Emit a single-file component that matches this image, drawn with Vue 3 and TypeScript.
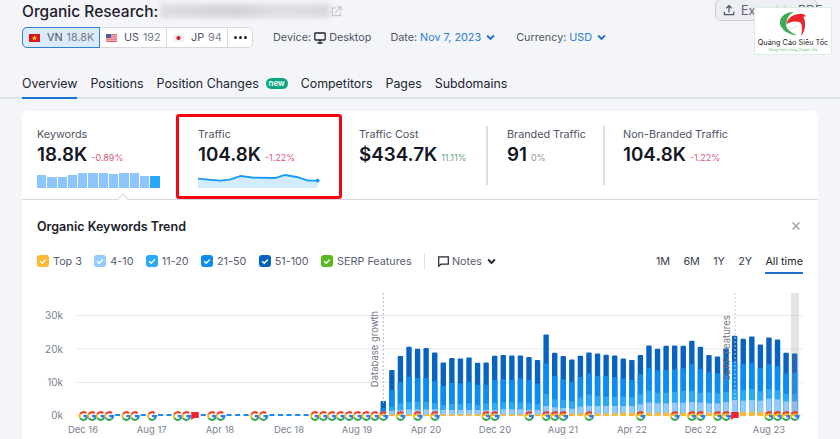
<script setup lang="ts">
import { computed } from "vue";

type Marker = { i: number; kind: "g" | "dash" | "flag" };

const BASE = 415;
const K = 3.33;
const xOf = (i: number) => 383.3 + 8.57 * i;
const yOf = (v: number) => BASE - v * K;

// cumulative values in k: total, up to 21-50, up to 11-20, up to 4-10
const rows: number[][] = [
  [4.2, 2, 1, 0.5], [13.5, 7.5, 2.5, 1.3], [17.7, 9.9, 3.5, 1.5], [20.5, 11.5, 3.9, 1.7], [19.9, 11.1, 3.9, 1.7],
  [20.1, 11.1, 3.9, 1.7], [18.8, 10.2, 3.5, 1.7], [15.8, 8.7, 3, 1.5], [17.1, 9.7, 3.3, 1.5], [17, 9.5, 3.3, 1.5],
  [17.3, 9.9, 3.5, 1.5], [15.7, 9, 3, 1.5], [15.8, 9.1, 3.5, 1.5], [17.8, 10.5, 3.7, 1.5], [18, 10.7, 3.9, 1.7],
  [17.9, 10.5, 3.9, 1.7], [17.9, 11, 3.7, 1.7], [17.4, 10.5, 3.5, 1.5], [16.5, 9.4, 3.3, 1.5], [24.2, 15.5, 6.3, 2.7],
  [18.7, 11.7, 4.7, 2.3], [17.7, 10.7, 4.5, 2.1], [16.7, 9.9, 4.1, 1.9], [17.8, 11.4, 5.3, 2.5], [18.8, 12.5, 6.2, 2.7],
  [18.5, 11.7, 5.7, 2.7], [18.1, 11.7, 5.5, 2.7], [17.9, 11.3, 5.5, 2.7], [17, 11, 5.5, 2.7], [16.5, 10.5, 5.3, 2.7],
  [18, 12.2, 6.3, 3.2], [20.9, 14.1, 7.3, 3.7], [19.9, 13.5, 6.7, 3.5], [20.8, 13.5, 6.7, 3.5], [20.9, 13.7, 6.9, 3.7],
  [20.8, 14, 7.2, 3.7], [22.3, 15.3, 7.2, 3.9], [20.5, 13.8, 6.7, 3.7], [18, 12.8, 6.7, 3.5], [17.6, 12.5, 6.5, 3.5],
  [20, 12, 6.9, 3.9], [23.8, 16, 7.5, 4.5], [22.9, 15.3, 7.5, 4.3], [23.6, 15.7, 7.8, 4.5], [21.2, 14.1, 7.1, 4.3],
  [23.3, 15.3, 7.8, 4.9], [22.7, 14.7, 7.5, 4.7], [18.7, 12.5, 6.3, 4.1], [18.5, 12.7, 6.3, 4.1],
];

const shades = ["#0862bf", "#0b8cf3", "#2aa8fa", "#93caff"];

const bars = computed(() =>
  rows.map((r, i) => ({
    x: xOf(i) - 2.7,
    top3: i < 20 ? 0.2 : i < 28 ? 0.5 : i < 42 ? 0.7 : 0.95,
    parts: r.map((v, n) => ({ y: yOf(v), h: v * K, fill: shades[n] })),
  })),
);

const markers: Marker[] = [];
const addAll = (list: number[], kind: Marker["kind"]) => list.forEach((i) => markers.push({ i, kind }));
addAll([-31, -28, -26, -25, -21, -18, -17, -16, -13, -12, -11, -10, -9], "dash");
addAll([-35, -34, -33, -32, -30, -29, -27, -24, -23, -20, -19, -15, -14, -8, -7, -6, -5, -4, -3, -2, -1, 0], "g");
addAll([2, 4, 6, 12, 13, 17, 19, 20, 21, 24, 30, 34, 36, 37, 39, 40, 45, 46, 47, 48], "g");
addAll([-22, 41], "flag");

const gridLines = [
  { y: 315.5, label: "30k" },
  { y: 349, label: "20k" },
  { y: 382.5, label: "10k" },
  { y: 415, label: "0k" },
];

const xLabels = [
  { x: 83, t: "Dec 16" }, { x: 151.7, t: "Aug 17" }, { x: 220, t: "Apr 18" }, { x: 289, t: "Dec 18" },
  { x: 357, t: "Aug 19" }, { x: 426, t: "Apr 20" }, { x: 495, t: "Dec 20" }, { x: 563, t: "Aug 21" },
  { x: 632, t: "Apr 22" }, { x: 700.7, t: "Dec 22" }, { x: 769, t: "Aug 23" },
];

const tabs = ["Overview", "Positions", "Position Changes", "Competitors", "Pages", "Subdomains"];
const sparkBars = [13.3, 11.3, 11.3, 13, 15.3, 14.7, 15.3, 13.7, 15, 14.7, 12, 12];
const legend = [
  { label: "Top 3", color: "#ffb92e" },
  { label: "4-10", color: "#93caff" },
  { label: "11-20", color: "#2aa8fa" },
  { label: "21-50", color: "#0b8cf3" },
  { label: "51-100", color: "#0862bf" },
  { label: "SERP Features", color: "#59b81f" },
];
const ranges = ["1M", "6M", "1Y", "2Y", "All time"];
</script>

<template>
  <div class="page">
    <header class="head">
      <div class="title-row">
        <h1>Organic Research:</h1>
        <div class="blurred"></div>
        <svg class="ext" viewBox="0 0 12 12" fill="none" stroke="#c3c6cf" stroke-width="1.3">
          <path d="M5 2H1.5v8.5H10V7" />
          <path d="M4.5 7.5L10.5 1.5M6.8 1h4.2v4.2" />
        </svg>
        <button class="export">
          <svg viewBox="0 0 14 14" fill="none" stroke="#4c5263" stroke-width="1.4">
            <path d="M7 10V2M3.8 5L7 1.8 10.2 5M1.5 9v3.5h11V9" />
          </svg>
          Export to PDF
        </button>
      </div>

      <div class="filter-row">
        <div class="chips">
          <div class="chip on vn">
            <svg class="flag" viewBox="0 0 11 8"><rect width="11" height="8" fill="#d8161f" /><path d="M5.5 1.2l.8 2h2l-1.6 1.3.6 2-1.8-1.2-1.8 1.2.6-2L2.7 3.2h2z" fill="#ffd21f" /></svg>
            <span>VN</span><em>18.8K</em>
          </div>
          <div class="chip us">
            <svg class="flag" viewBox="0 0 11 8"><rect width="11" height="8" fill="#e4646f" /><path d="M0 1.6h11M0 3.2h11M0 4.8h11M0 6.4h11" stroke="#f6d8dc" stroke-width=".7" /><rect width="5" height="4" fill="#4a5fa8" /></svg>
            <span>US</span><em>192</em>
          </div>
          <div class="chip jp">
            <svg class="flag" viewBox="0 0 11 8"><rect width="11" height="8" fill="#f1f1f3" /><circle cx="5.5" cy="4" r="2.1" fill="#d3142c" /></svg>
            <span>JP</span><em>94</em>
          </div>
          <div class="chip more"><i></i><i></i><i></i></div>
        </div>
        <div class="opt device">
          Device:
          <svg class="monitor" viewBox="0 0 12 12" fill="none" stroke="#20242e" stroke-width="1.3">
            <rect x=".8" y="1" width="10.4" height="7" rx=".8" />
            <path d="M6 8v2.5M3.4 11h5.2" />
          </svg>
          Desktop
        </div>
        <div class="opt date">Date: <b>Nov 7, 2023</b><svg class="chev" viewBox="0 0 8 6"><path d="M1 1.2l3 3 3-3" /></svg></div>
        <div class="opt currency">Currency: <b>USD</b><svg class="chev" viewBox="0 0 8 6"><path d="M1 1.2l3 3 3-3" /></svg></div>
      </div>

      <nav class="tabs">
        <div v-for="(t, n) in tabs" :key="t" class="tab" :class="{ active: n === 0 }">
          {{ t }}<span v-if="t === 'Position Changes'" class="new">new</span>
        </div>
      </nav>
    </header>

    <section class="card">
      <div class="metrics">
        <div class="metric kw">
          <div class="lbl">Keywords</div>
          <div class="val">18.8K<small class="neg">-0.89%</small></div>
          <div class="spark">
            <i v-for="(h, n) in sparkBars" :key="n" :class="{ last: n === sparkBars.length - 1 }" :style="{ height: h + 'px' }"></i>
          </div>
          <span class="notch"></span>
        </div>
        <div class="metric traffic">
          <div class="lbl">Traffic</div>
          <div class="val">104.8K<small class="neg">-1.22%</small></div>
          <svg class="line" viewBox="0 0 124 15">
            <path d="M0 5.7L10.3 6.7 22 7.7 32 6.7 42.7 3 55.3 4.7 77 5 87 2 98.7 4 110.3 7.7 119.7 7.7V15H0Z" fill="#d3ecfd" />
            <path d="M0 5.7L10.3 6.7 22 7.7 32 6.7 42.7 3 55.3 4.7 77 5 87 2 98.7 4 110.3 7.7 119.7 7.7" fill="none" stroke="#159bf5" stroke-width="1.8" />
            <circle cx="119.7" cy="7.7" r="1.9" fill="#159bf5" />
          </svg>
        </div>
        <div class="metric cost">
          <div class="lbl">Traffic Cost</div>
          <div class="val">$434.7K<small class="pos">11.11%</small></div>
        </div>
        <div class="metric branded">
          <div class="lbl">Branded Traffic</div>
          <div class="val">91<small class="zero">0%</small></div>
        </div>
        <div class="metric non">
          <div class="lbl">Non-Branded Traffic</div>
          <div class="val">104.8K<small class="neg">-1.22%</small></div>
        </div>
      </div>

      <div class="trend-head">
        <h2>Organic Keywords Trend</h2>
        <svg class="close" viewBox="0 0 10 10" stroke="#9a9ea9" stroke-width="1.4"><path d="M1.5 1.5l7 7M8.5 1.5l-7 7" /></svg>
      </div>

      <div class="legend-row">
        <div v-for="l in legend" :key="l.label" class="leg">
          <svg class="box" viewBox="0 0 12 12">
            <rect width="12" height="12" rx="3" :fill="l.color" />
            <path d="M3.2 6.2l2 2 3.6-3.8" fill="none" stroke="#fff" stroke-width="1.5" />
          </svg>
          {{ l.label }}
        </div>
        <div class="notes">
          <svg viewBox="0 0 11 11" fill="none" stroke="#20242e" stroke-width="1.2"><path d="M.7.8h9.6v7.4H3L.7 10.2Z" /></svg>
          Notes
          <svg class="chev dark" viewBox="0 0 8 6"><path d="M1 1.2l3 3 3-3" /></svg>
        </div>
        <div class="ranges">
          <span v-for="r in ranges" :key="r" :class="{ sel: r === 'All time' }">{{ r }}</span>
        </div>
      </div>

      <!-- viewBox follows page coordinates so the chart data stays readable -->
      <svg class="chart" viewBox="22 285 796 154" width="796" height="154">
        <defs>
          <g id="gmark" transform="scale(1.2)">
            <g fill="none" stroke-width="1.7">
              <path d="M-2.7-1.7A3.2 3.2 0 0 1 2.3-2.3" stroke="#ea4335" />
              <path d="M-2.7 1.7A3.2 3.2 0 0 1-2.7-1.7" stroke="#fbbc05" />
              <path d="M2.4 2.2A3.2 3.2 0 0 1-2.7 1.7" stroke="#34a853" />
              <path d="M.1.1H3.3A3.2 3.2 0 0 1 2.3 2.3" stroke="#2a7de1" />
            </g>
          </g>
        </defs>

        <g v-for="g in gridLines" :key="g.label">
          <line x1="76" x2="803" :y1="g.y" :y2="g.y" stroke="#e8e9ef" />
          <text x="63" :y="g.y + 3.5" text-anchor="end" class="ay">{{ g.label }}</text>
        </g>

        <g v-for="(b, n) in bars" :key="n">
          <rect v-for="(p, m) in b.parts" :key="m" :x="b.x" :y="p.y" width="5.4" :height="p.h" :fill="p.fill" :rx="m === 0 ? 1 : 0" />
          <rect :x="b.x" :y="BASE - b.top3 * K" width="5.4" :height="b.top3 * K + 1" fill="#ffb92e" />
        </g>

        <line x1="383.3" x2="383.3" y1="293" y2="404" stroke="#b6b9c2" stroke-dasharray="2 2" />
        <line x1="735" x2="735" y1="293" y2="404" stroke="#c9ccd4" stroke-dasharray="2 2" />
        <text class="rot" transform="translate(377.5 349) rotate(-90)" text-anchor="middle">Database growth</text>
        <text class="rot" transform="translate(729.5 348) rotate(-90)" text-anchor="middle">SERP Features</text>
        <rect x="791" y="293" width="8" height="122" fill="#7d828c" opacity=".22" />

        <g v-for="m in markers" :key="m.i + m.kind">
          <rect v-if="m.kind === 'dash'" :x="xOf(m.i) - 2.5" y="414" width="5" height="2" fill="#1a8cf0" />
          <use v-else-if="m.kind === 'g'" href="#gmark" :transform="`translate(${xOf(m.i)} 416)`" />
          <path v-else :transform="`translate(${xOf(m.i) - 3.5} 412)`" d="M0 0h7.5v6H3L0 8Z" fill="#f5222d" />
        </g>

        <text v-for="l in xLabels" :key="l.t" :x="l.x" y="433" text-anchor="middle" class="ax">{{ l.t }}</text>
      </svg>
    </section>

    <aside class="logo">
      <svg viewBox="0 0 32 28">
        <path d="M17 1C6 1 1 8 2 14c1 6 10 12 18 12-8-4-13-8-11-14C10 6 13 3 17 1Z" fill="#3eaa55" />
        <path d="M9 14c1-7 8-11 16-11 2 0 4 1 5 3-1 0-2 0-3 .5 3 4 3 14-2 20.5 1-6 1-12-1-14.5-5-2-11-1-15 1.5Z" fill="#e8262b" />
        <path d="M12 18c3 1 7 0 9-3" fill="none" stroke="#9aa0a0" stroke-width="1" stroke-dasharray="1 1.5" />
      </svg>
      <div class="brand">Quảng Cáo Siêu Tốc</div>
      <div class="slogan">Đồng Hành Cùng Chuyên Gia</div>
    </aside>
  </div>
</template>

<style scoped>
.page {
  position: relative;
  width: 840px;
  height: 439px;
  overflow: hidden;
  background: #f4f5f9;
  color: #1c2029;
  font-family: Inter, "Liberation Sans", sans-serif;
}

.head {
  padding: 0 22px;
  height: 111px;
  box-sizing: border-box;
}

.title-row {
  display: flex;
  align-items: center;
  height: 22px;
}

h1 {
  margin: 0;
  font-size: 15.5px;
  font-weight: 500;
  white-space: nowrap;
}

.blurred {
  width: 170px;
  height: 14px;
  margin-left: 2px;
  background: linear-gradient(90deg, #dcdee3, #d2d4da 45%, #dfe0e5 70%, #d8dadf);
  filter: blur(2.5px);
}

.ext {
  width: 11px;
  height: 11px;
  margin-left: 1px;
}

.export {
  display: flex;
  align-items: center;
  gap: 6px;
  box-sizing: border-box;
  width: 103px;
  height: 22px;
  margin: -2px 0 0 auto;
  padding: 0 0 0 7px;
  border: 1px solid #c9ccd5;
  border-radius: 6px;
  background: #eceef3;
  color: #5c6272;
  font: 12.5px Inter, sans-serif;
  white-space: nowrap;
}

.export svg {
  width: 12px;
  height: 12px;
  flex: none;
}

.filter-row {
  display: flex;
  align-items: center;
  height: 21px;
  margin-top: 5px;
  font-size: 10.8px;
  color: #4f5564;
}

.chips {
  display: flex;
  height: 21px;
  width: 231px;
  box-sizing: border-box;
  background: #fff;
  border: 1px solid #d5d8e0;
  border-radius: 5px;
}

.chip {
  display: flex;
  align-items: center;
  box-sizing: border-box;
  padding-left: 6px;
  font-size: 10.8px;
  color: #4b5161;
  border-right: 1px solid #d5d8e0;
}

.chip em {
  margin-left: 4px;
  font-style: normal;
  color: #777d8c;
}

.chip span {
  margin-left: 7px;
}

.vn {
  width: 78px;
  margin: -1px 0 -1px -1px;
  background: #dcebfa;
  border: 1px solid #2f80d3;
  border-radius: 5px 0 0 5px;
}

.us {
  width: 67px;
}

.jp {
  width: 61px;
}

.flag {
  width: 11px;
  height: 8px;
  flex: none;
}

.more {
  flex: 1;
  border: none;
  justify-content: center;
  gap: 2px;
  padding: 0;
}

.more i {
  width: 3px;
  height: 3px;
  border-radius: 50%;
  background: #1c2029;
}

.opt {
  display: flex;
  align-items: center;
  gap: 3px;
  white-space: nowrap;
}

.opt b {
  font-weight: 400;
  color: #2a7cd6;
}

.device {
  margin-left: 20px;
}

.date {
  margin-left: 19px;
}

.currency {
  margin-left: 21px;
}

.monitor {
  width: 12px;
  height: 12px;
}

.chev {
  width: 9px;
  height: 7px;
  margin-left: 2px;
  fill: none;
  stroke: #1f6fc9;
  stroke-width: 1.7;
}

.chev.dark {
  stroke: #20242e;
}

.tabs {
  display: flex;
  gap: 13px;
  height: 25px;
  margin: 24px -22px 0;
  padding: 0 22px;
  border-bottom: 2px solid #dfe1e8;
  font-size: 12.4px;
}

.tab {
  display: flex;
  align-items: flex-start;
  line-height: 17px;
  padding-top: 3px;
  color: #20242e;
  white-space: nowrap;
}

.tab.active {
  margin-bottom: -2px;
  border-bottom: 2px solid #1d72cf;
}

.new {
  margin: 3px 0 0 7px;
  width: 22px;
  height: 11px;
  line-height: 10px;
  text-align: center;
  border-radius: 6px;
  background: #0aa57f;
  color: #fff;
  font-size: 8px;
  font-weight: 600;
}

.card {
  margin: 0 22px;
  height: 328px;
  background: #fff;
  border-radius: 6px 6px 0 0;
}

.metrics {
  display: flex;
  height: 89px;
  box-sizing: border-box;
  padding-top: 3px;
  border-bottom: 1px solid #d6d9e2;
}

.metric {
  position: relative;
  box-sizing: border-box;
}

.lbl {
  margin-top: 13px;
  font-size: 10.8px;
  line-height: 15px;
  color: #4f5564;
}

.val {
  display: flex;
  align-items: baseline;
  margin-top: 1px;
  font-size: 18.8px;
  font-weight: 600;
  line-height: 24px;
  color: #14171f;
}

.val small {
  margin-left: 4px;
  font-size: 9px;
  font-weight: 400;
}

.neg {
  color: #d9597a;
}

.pos {
  color: #5fa583;
}

.zero {
  color: #8d93a0;
}

.kw {
  width: 154px;
  padding-left: 15px;
}

.spark {
  display: flex;
  align-items: flex-end;
  gap: 1px;
  height: 16px;
  margin-top: 2px;
}

.spark i {
  width: 9.3px;
  background: #8cc6fd;
}

.spark i.last {
  background: #2aa9fb;
}

.notch {
  position: absolute;
  left: 97px;
  bottom: -1px;
  width: 7px;
  height: 7px;
  background: #fff;
  border-left: 1px solid #d6d9e2;
  border-top: 1px solid #d6d9e2;
  transform: translateY(3px) rotate(45deg);
}

.traffic {
  width: 166px;
  height: 85px;
  padding-left: 19px;
  border: 3px solid #f5050f;
  border-radius: 3px;
}

.traffic .lbl {
  margin-top: 10px;
}

.line {
  display: block;
  width: 124px;
  height: 15px;
  margin-top: 3px;
}

.cost {
  width: 145px;
  padding-left: 17px;
}

.cost::after,
.branded::after {
  content: "";
  position: absolute;
  right: -1px;
  top: 12px;
  width: 2px;
  height: 59px;
  background: #dcdee5;
}

.branded {
  width: 117px;
  padding-left: 20px;
}

.non {
  padding-left: 19px;
}

.trend-head {
  display: flex;
  align-items: center;
  justify-content: space-between;
  height: 20px;
  margin-top: 16px;
  padding: 0 17px 0 15px;
}

h2 {
  margin: 0;
  font-size: 12.5px;
  font-weight: 600;
}

.close {
  width: 10px;
  height: 10px;
}

.legend-row {
  display: flex;
  align-items: center;
  height: 20px;
  margin-top: 15px;
  padding-left: 15px;
  font-size: 10.8px;
  color: #5a6070;
}

.leg {
  display: flex;
  align-items: center;
  gap: 4px;
  margin-right: 12.4px;
  white-space: nowrap;
}

.box {
  width: 12px;
  height: 12px;
  flex: none;
}

.notes {
  display: flex;
  align-items: center;
  gap: 3px;
  height: 16px;
  padding-left: 13px;
  border-left: 1px solid #dcdee5;
}

.notes > svg:first-child {
  width: 11px;
  height: 11px;
}

.ranges {
  display: flex;
  gap: 13.3px;
  margin-left: auto;
  margin-right: 15px;
  color: #3b404d;
}

.ranges span {
  padding: 4px 0;
  border-top: 2px solid transparent;
  border-bottom: 2px solid transparent;
}

.ranges .sel {
  border-bottom-color: #1d72cf;
  color: #20242e;
}

.chart {
  display: block;
  margin-top: 14px;
}

.ax {
  font-size: 9.5px;
  fill: #7b8090;
}

.ay {
  font-size: 10px;
  fill: #7b8090;
}

.rot {
  font-size: 9.5px;
  fill: #6e7380;
}

.logo {
  position: absolute;
  left: 754px;
  top: 7px;
  width: 78px;
  height: 48px;
  box-sizing: border-box;
  border: 1px solid #d7efdd;
  border-radius: 2px;
  background: #fff;
  text-align: center;
}

.logo svg {
  display: block;
  width: 30px;
  height: 26px;
  margin: 3px auto 0;
}

.brand {
  margin-top: 1px;
  font-size: 7.3px;
  line-height: 9px;
  color: #222;
  white-space: nowrap;
}

.slogan {
  font-size: 3.5px;
  line-height: 6px;
  color: #5fbf78;
  white-space: nowrap;
}
</style>
